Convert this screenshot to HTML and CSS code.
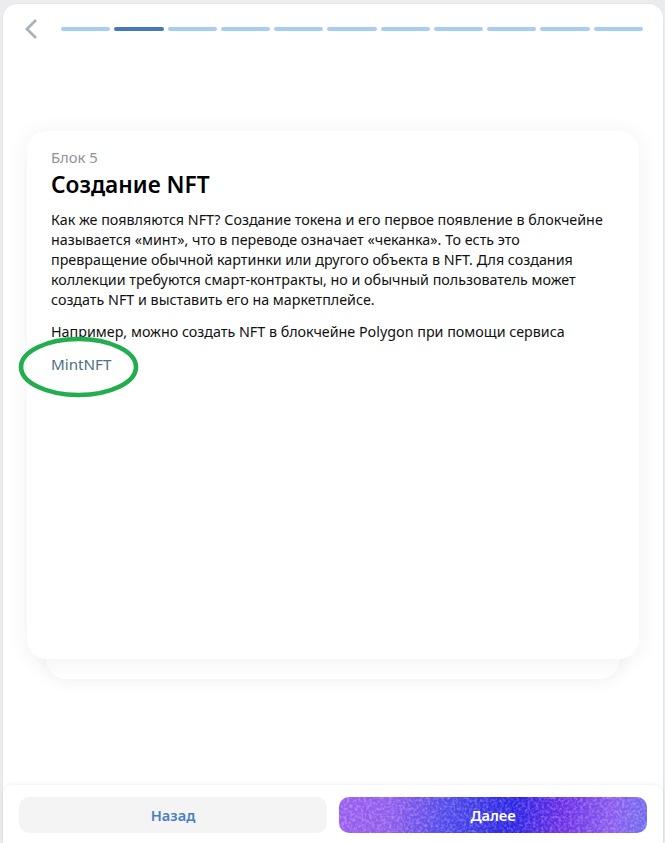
FILE: index.html
```html
<!DOCTYPE html>
<html lang="ru">
<head>
<meta charset="utf-8">
<title>Блок 5</title>
<link rel="stylesheet" href="styles.css">
</head>
<body>
<div class="window">
  <header class="topbar">
    <svg class="back" viewBox="0 0 14 22" width="14" height="22" aria-hidden="true"><path d="M12 2 L3 11 L12 20" fill="none" stroke="#a9b1ba" stroke-width="2.8"/></svg>
    <div class="progress">
      <span class="seg"></span><span class="seg current"></span><span class="seg"></span><span class="seg"></span><span class="seg"></span><span class="seg"></span><span class="seg"></span><span class="seg"></span><span class="seg"></span><span class="seg"></span><span class="seg"></span>
    </div>
  </header>
  <main class="stage">
    <div class="stack">
      <div class="card-back"></div>
      <article class="card">
        <div class="eyebrow">Блок 5</div>
        <h1 class="title">Создание NFT</h1>
        <p class="text">Как же появляются NFT? Создание токена и его первое появление в блокчейне называется «минт», что в переводе означает «чеканка». То есть это превращение обычной картинки или другого объекта в NFT. Для создания коллекции требуются смарт-контракты, но и обычный пользователь может создать NFT и выставить его на маркетплейсе.</p>
        <p class="text">Например, можно создать NFT в блокчейне Polygon при помощи сервиса</p>
        <a class="link">MintNFT</a>
        <svg class="circle" viewBox="0 0 124 66" width="124" height="66" aria-hidden="true"><ellipse cx="60.5" cy="33" rx="57.5" ry="28" fill="none" stroke="#22ad4e" stroke-width="4.6"/></svg>
      </article>
    </div>
  </main>
  <footer class="actions">
    <button class="btn secondary">Назад</button>
    <button class="btn primary">
      <svg class="noise" width="308" height="36" aria-hidden="true">
        <filter id="grain"><feTurbulence type="fractalNoise" baseFrequency="0.36" numOctaves="2" seed="4"/><feColorMatrix values="0 0 0 0 1  0 0 0 0 1  0 0 0 0 1  2.4 0 0 0 -0.95"/></filter>
        <rect width="308" height="36" filter="url(#grain)"/>
      </svg>
      <span class="btn-label">Далее</span>
    </button>
  </footer>
</div>
</body>
</html>
```
FILE: styles.css
```css
* { box-sizing: border-box; }
html, body { margin: 0; height: 100%; }
body {
  background: #ebecee;
  font-family: "Noto Sans", "Open Sans", sans-serif;
  overflow: hidden;
}
.window {
  height: 839px;
  margin: 4px 2px 0 3px;
  background: #fff;
  border-radius: 14px 14px 0 0;
  box-shadow: 0 0 0 1px #e2e6ea;
  display: flex;
  flex-direction: column;
}
.topbar {
  height: 48px;
  display: flex;
  align-items: flex-start;
  padding: 14px 20px 0 21px;
  flex: none;
}
.back { flex: none; margin-right: 23px; }
.progress {
  flex: 1;
  display: flex;
  gap: 3.8px;
  margin-top: 9px;
}
.seg {
  flex: 1;
  height: 4px;
  border-radius: 2px;
  background: #a5cef7;
}
.seg.current { background: #4679b6; }
.stage {
  flex: 1;
  padding: 79px 24px 0 24px;
}
.stack { position: relative; }
.card {
  position: relative;
  height: 528px;
  padding: 17px 28px 18px 24px;
  background: #fff;
  border-radius: 20px;
  box-shadow: 0 2px 22px rgba(30, 40, 60, .07);
}
.card-back {
  position: absolute;
  left: 19px;
  right: 19px;
  bottom: -20px;
  height: 60px;
  background: #fff;
  border-radius: 20px;
  box-shadow: 0 2px 16px rgba(30, 40, 60, .07);
}
.eyebrow {
  font-size: 14.8px;
  line-height: 19px;
  color: #8d939b;
}
.title {
  margin: 3px 0 10px;
  font-size: 22.7px;
  line-height: 30px;
  font-weight: 600;
  color: #000;
}
.text {
  margin: 0 0 12px;
  font-size: 14.3px;
  line-height: 20px;
  color: #111;
}
.link {
  display: block;
  font-size: 15.2px;
  line-height: 20px;
  color: #4f7085;
}
.circle {
  position: absolute;
  left: -9px;
  top: 203px;
}
.actions {
  flex: none;
  height: 58px;
  display: flex;
  gap: 12px;
  padding: 12px 16px 10px;
  background: #fff;
  border-radius: 10px 10px 0 0;
  box-shadow: 0 -1px 4px rgba(30, 40, 60, .07);
}
.btn {
  position: relative;
  flex: 1;
  height: 36px;
  border: 0;
  border-radius: 10px;
  font: 600 14.6px/36px "Noto Sans", sans-serif;
  padding: 0;
  overflow: hidden;
}
.secondary { background: #f4f4f5; color: #4a7fc1; }
.primary {
  color: #fff;
  background: linear-gradient(100deg, #9a5df0 0%, #8f5cec 18%, #4e48ea 36%, #2a23e4 56%, #6c2ee6 72%, #8a5cf0 88%, #6f6cf0 100%);
}
.noise { position: absolute; left: 0; top: 0; opacity: .3; }
.btn-label { position: relative; }
```
